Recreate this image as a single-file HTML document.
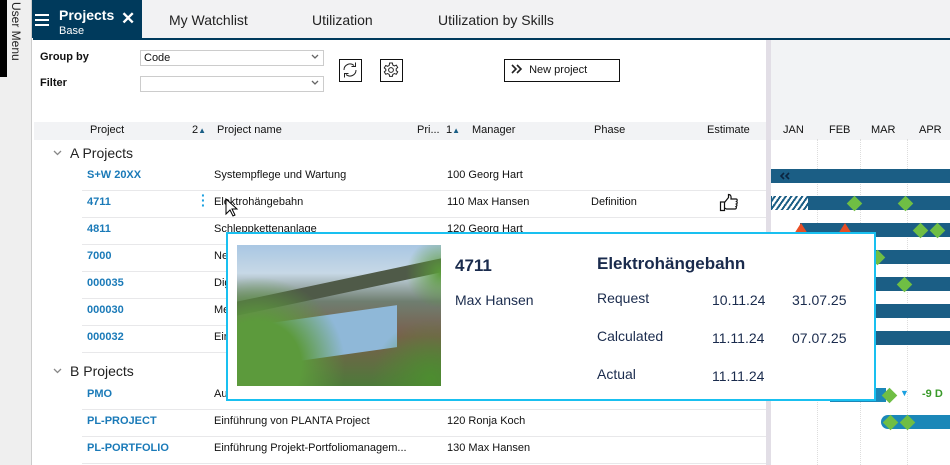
<!DOCTYPE html>
<html><head><meta charset="utf-8"><style>
*{margin:0;padding:0;box-sizing:border-box}
body{width:950px;height:465px;overflow:hidden;background:#fff;font-family:"Liberation Sans",sans-serif;font-size:11px;color:#111;position:relative}
.a{position:absolute}
.link{color:#1a7ab8;font-weight:bold}
.row{position:absolute;left:82px;width:684px;height:1px;background:#e8e8ea}
.bar{position:absolute;height:14px;background:#1b5e85}
.dia{position:absolute;width:11px;height:11px;background:#6fbe44;transform:rotate(45deg)}
.tri{position:absolute;width:0;height:0;border-left:7px solid transparent;border-right:7px solid transparent;border-bottom:11px solid #e84e25}
.vg{position:absolute;top:139px;bottom:0;width:0;border-left:1px dotted #ddd}
.dd{position:absolute;right:4px;top:3px}
</style></head><body>
<div class="a" style="left:0;top:0;width:32px;height:465px;background:#efefef;border-right:1px solid #ccc"></div>
<div class="a" style="left:0;top:0;width:7px;height:77px;background:#000"></div>
<div class="a" style="left:9px;top:2px;width:14px;height:70px;writing-mode:vertical-rl;font-size:12px;color:#222">User Menu</div>
<div class="a" style="left:32px;top:0;width:918px;height:38px;background:#f2f2f3"></div>
<div class="a" style="left:32px;top:0;width:110px;height:38px;background:#003a5c"></div>
<div class="a" style="left:33px;top:38px;width:917px;height:2px;background:#003a5c"></div>
<div class="a" style="left:35px;top:14px;width:14px;height:2px;background:#fff;box-shadow:0 5px 0 #fff,0 10px 0 #fff"></div>
<div class="a" style="left:59px;top:7px;color:#fff;font-size:14px;font-weight:bold">Projects</div>
<div class="a" style="left:59px;top:25px;color:#fff;font-size:11px">Base</div>
<div class="a" style="left:121px;top:9px;color:#fff;font-size:17px;font-weight:bold">✕</div>
<div class="a" style="left:169px;top:12px;font-size:14px;color:#222">My Watchlist</div>
<div class="a" style="left:312px;top:12px;font-size:14px;color:#222">Utilization</div>
<div class="a" style="left:438px;top:12px;font-size:14px;color:#222">Utilization by Skills</div>
<div class="a" style="left:40px;top:51px;font-weight:bold">Group by</div>
<div class="a" style="left:40px;top:77px;font-weight:bold">Filter</div>
<div class="a" style="left:140px;top:50px;width:184px;height:16px;border:1px solid #ccc;padding:0 3px;line-height:14px">Code<svg class="dd" width="8" height="6"><path d="M1 1l3 3 3-3" fill="none" stroke="#666" stroke-width="1.3"/></svg></div>
<div class="a" style="left:140px;top:76px;width:184px;height:16px;border:1px solid #ccc"><svg class="dd" width="8" height="6"><path d="M1 1l3 3 3-3" fill="none" stroke="#666" stroke-width="1.3"/></svg></div>
<div class="a" style="left:339px;top:59px;width:23px;height:23px;border:1.5px solid #111"><svg width="20" height="20" viewBox="0 0 20 20"><path d="M4 10a6 6 0 0 1 10-4.5M16 10a6 6 0 0 1-10 4.5" fill="none" stroke="#222" stroke-width="1"/><path d="M15.5 2.5v4h-4M4.5 17.5v-4h4" fill="none" stroke="#222" stroke-width="1"/></svg></div>
<div class="a" style="left:380px;top:59px;width:23px;height:23px;border:1.5px solid #111"><svg width="20" height="20" viewBox="0 0 20 20"><path d="M8.6 3h2.8l.4 2 1.6.9 1.9-.8 1.4 2.4-1.5 1.3v1.8l1.5 1.3-1.4 2.4-1.9-.8-1.6.9-.4 2H8.6l-.4-2-1.6-.9-1.9.8-1.4-2.4 1.5-1.3V9.2L3.3 7.9l1.4-2.4 1.9.8 1.6-.9z" fill="none" stroke="#222" stroke-width="1"/><circle cx="10" cy="10" r="2.4" fill="none" stroke="#222" stroke-width="1"/></svg></div>
<div class="a" style="left:504px;top:59px;width:116px;height:23px;border:1.5px solid #111;padding-left:6px;line-height:20px;font-size:11px"><svg width="12" height="10" style="vertical-align:-1px"><path d="M1 1l4 4-4 4M6 1l4 4-4 4" fill="none" stroke="#222" stroke-width="1.6"/></svg>&nbsp; New project</div>
<div class="a" style="left:766px;top:40px;width:5px;height:425px;background:#e2dee6"></div>
<div class="a" style="left:34px;top:122px;width:732px;height:18px;background:#f2f3f5"></div>
<div class="a" style="left:771px;top:40px;width:179px;height:100px;background:#f2f3f5"></div>
<div class="a" style="left:90px;top:124px">Project</div>
<div class="a" style="left:192px;top:124px">2<span style="font-size:8px;color:#1a5e85">▲</span></div>
<div class="a" style="left:217px;top:124px">Project name</div>
<div class="a" style="left:417px;top:124px">Pri...</div>
<div class="a" style="left:446px;top:124px">1<span style="font-size:8px;color:#1a5e85">▲</span></div>
<div class="a" style="left:472px;top:124px">Manager</div>
<div class="a" style="left:594px;top:124px">Phase</div>
<div class="a" style="left:707px;top:124px">Estimate</div>
<div class="a" style="left:783px;top:124px">JAN</div>
<div class="a" style="left:829px;top:124px">FEB</div>
<div class="a" style="left:871px;top:124px">MAR</div>
<div class="a" style="left:919px;top:124px">APR</div>
<div class="vg" style="left:817px"></div><div class="vg" style="left:860px"></div><div class="vg" style="left:907px"></div>
<svg class="a" style="left:53px;top:150px" width="9" height="6"><path d="M1 1l3.5 3.5L8 1" fill="none" stroke="#888" stroke-width="1.3"/></svg>
<div class="a" style="left:70px;top:145px;font-size:14px;color:#222">A Projects</div>
<svg class="a" style="left:53px;top:368px" width="9" height="6"><path d="M1 1l3.5 3.5L8 1" fill="none" stroke="#888" stroke-width="1.3"/></svg>
<div class="a" style="left:70px;top:363px;font-size:14px;color:#222">B Projects</div>
<div class="a link" style="left:87px;top:169px">S+W 20XX</div><div class="a" style="left:214px;top:169px">Systempflege und Wartung</div><div class="a" style="left:447px;top:169px">100 Georg Hart</div>
<div class="row" style="top:190px"></div>
<div class="a link" style="left:87px;top:196px">4711</div><div class="a" style="left:201px;top:193px;color:#1aa0e0;font-weight:bold;font-size:14px;line-height:5px">·<br>·<br>·</div><div class="a" style="left:214px;top:196px">Elektrohängebahn</div><div class="a" style="left:447px;top:196px">110 Max Hansen</div><div class="a" style="left:591px;top:196px">Definition</div>
<svg class="a" style="left:719px;top:193px" width="20" height="19" viewBox="0 0 20 19"><path d="M1.5 9h4v8.5h-4z" fill="none" stroke="#111" stroke-width="1.2"/><path d="M5.5 9.5l4-5V1.5c2 0 3 1.5 2.5 4.5h5c1.5 0 1.5 2 .5 2.5 1 .5 1 2-.2 2.5 1 .5.8 2-.3 2.5.7.5.5 2.5-1 2.5H7.5l-2-1" fill="none" stroke="#111" stroke-width="1.2"/></svg>
<div class="row" style="top:217px"></div>
<div class="a link" style="left:87px;top:223px">4811</div><div class="a" style="left:214px;top:223px">Schleppkettenanlage</div><div class="a" style="left:447px;top:223px">120 Georg Hart</div>
<div class="row" style="top:244px"></div>
<div class="a link" style="left:87px;top:250px">7000</div><div class="a" style="left:214px;top:250px">Ne</div>
<div class="row" style="top:271px"></div>
<div class="a link" style="left:87px;top:277px">000035</div><div class="a" style="left:214px;top:277px">Dig</div>
<div class="row" style="top:298px"></div>
<div class="a link" style="left:87px;top:304px">000030</div><div class="a" style="left:214px;top:304px">Me</div>
<div class="row" style="top:325px"></div>
<div class="a link" style="left:87px;top:331px">000032</div><div class="a" style="left:214px;top:331px">Ein</div>
<div class="row" style="top:352px"></div>
<div class="a link" style="left:87px;top:388px">PMO</div><div class="a" style="left:214px;top:388px">Au</div>
<div class="row" style="top:409px"></div>
<div class="a link" style="left:87px;top:415px">PL-PROJECT</div><div class="a" style="left:214px;top:415px">Einführung von PLANTA Project</div><div class="a" style="left:447px;top:415px">120 Ronja Koch</div>
<div class="row" style="top:436px"></div>
<div class="a link" style="left:87px;top:442px">PL-PORTFOLIO</div><div class="a" style="left:214px;top:442px">Einführung Projekt-Portfoliomanagem...</div><div class="a" style="left:447px;top:442px">130 Max Hansen</div>
<div class="row" style="top:463px"></div>
<div class="bar" style="left:771px;top:169px;width:179px"></div>
<svg class="a" style="left:779px;top:172px" width="12" height="8"><path d="M5 1L2 4l3 3M10 1L7 4l3 3" fill="none" stroke="#0b2540" stroke-width="1.6"/></svg>
<div class="bar" style="left:771px;top:196px;width:179px"></div>
<div class="a" style="left:772px;top:196px;width:36px;height:14px;background:repeating-linear-gradient(-55deg,#fff 0 2.5px,#1b5e85 2.5px 4.5px)"></div>
<div class="dia" style="left:849px;top:198px"></div><div class="dia" style="left:900px;top:198px"></div>
<div class="bar" style="left:800px;top:223px;width:150px"></div>
<div class="tri" style="left:794px;top:223px"></div><div class="tri" style="left:838px;top:223px"></div>
<div class="dia" style="left:915px;top:225px"></div><div class="dia" style="left:932px;top:225px"></div>
<div class="bar" style="left:850px;top:250px;width:100px"></div><div class="dia" style="left:872px;top:252px"></div>
<div class="bar" style="left:850px;top:277px;width:100px"></div><div class="dia" style="left:899px;top:279px"></div>
<div class="bar" style="left:850px;top:304px;width:100px"></div>
<div class="bar" style="left:850px;top:331px;width:100px"></div>
<div class="bar" style="left:830px;top:388px;width:56px;background:#1b87b8"></div>
<div class="dia" style="left:884px;top:390px"></div>
<div class="a" style="left:900px;top:388px;color:#1aa0e0;font-size:9px">▼</div>
<div class="a" style="left:922px;top:388px;color:#3a9a2a;font-size:11px;font-weight:bold">-9 D</div>
<div class="bar" style="left:881px;top:415px;width:69px;background:#1b87b8;border-radius:7px 0 0 7px"></div>
<div class="dia" style="left:885px;top:417px"></div><div class="dia" style="left:902px;top:417px"></div>
<div class="a" style="left:226px;top:232px;width:650px;height:169px;background:#fff;border:2px solid #19c0f0"></div>
<div class="a" style="left:237px;top:245px;width:204px;height:141px;overflow:hidden;background:linear-gradient(180deg,#a9c7e3 0%,#c7d8e6 20%,#6f7e70 40%,#7a5e4c 65%,#4d7a3a 100%)">
<div class="a" style="left:0;top:35px;width:204px;height:14px;background:#4f5a48;transform:skewY(-12deg)"></div>
<div class="a" style="left:20px;top:70px;width:140px;height:42px;background:#8fb8d8;transform:skewY(-8deg)"></div>
<div class="a" style="left:0;top:0;width:204px;height:141px;background:radial-gradient(circle at 10% 85%,#5c9a3c 0,#5c9a3c 20%,transparent 40%),radial-gradient(circle at 95% 95%,#4d8d30 0,transparent 25%),radial-gradient(circle at 100% 20%,#5a9a3a 0,transparent 15%)"></div>
</div>
<div class="a" style="left:455px;top:256px;font-size:17px;font-weight:bold;color:#1a2b4d">4711</div>
<div class="a" style="left:455px;top:292px;font-size:14px;color:#1a2b4d">Max Hansen</div>
<div class="a" style="left:597px;top:254px;font-size:17px;font-weight:bold;color:#1a2b4d">Elektrohängebahn</div>
<div class="a" style="left:597px;top:290px;font-size:14px;color:#1a2b4d">Request</div>
<div class="a" style="left:712px;top:292px;font-size:14px;color:#1a2b4d">10.11.24</div>
<div class="a" style="left:792px;top:292px;font-size:14px;color:#1a2b4d">31.07.25</div>
<div class="a" style="left:597px;top:328px;font-size:14px;color:#1a2b4d">Calculated</div>
<div class="a" style="left:712px;top:330px;font-size:14px;color:#1a2b4d">11.11.24</div>
<div class="a" style="left:792px;top:330px;font-size:14px;color:#1a2b4d">07.07.25</div>
<div class="a" style="left:597px;top:366px;font-size:14px;color:#1a2b4d">Actual</div>
<div class="a" style="left:712px;top:368px;font-size:14px;color:#1a2b4d">11.11.24</div>
<svg class="a" style="left:225px;top:198px" width="14" height="20"><path d="M1 1v15l4-4 3 6 2-1-3-6h5z" fill="#fff" stroke="#000"/></svg>
</body></html>
